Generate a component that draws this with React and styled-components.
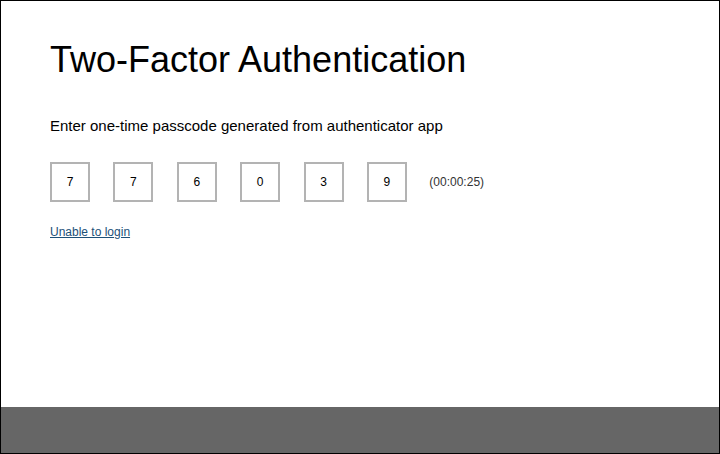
import React from "react";
import styled, { createGlobalStyle } from "styled-components";

const GlobalStyle = createGlobalStyle`
  html, body {
    margin: 0;
    padding: 0;
    background: #fff;
  }
  * {
    box-sizing: border-box;
  }
`;

const Frame = styled.div`
  width: 720px;
  height: 454px;
  border: 1px solid #000;
  display: flex;
  flex-direction: column;
  font-family: "Liberation Sans", Arial, sans-serif;
  color: #000;
`;
const Main = styled.main`
  flex: 1;
  padding: 37px 49px 0;
`;
const Title = styled.h1`
  margin: 0;
  font-size: 36px;
  font-weight: 400;
  line-height: 44px;
`;
const Prompt = styled.p`
  margin: 35px 0 0;
  font-size: 15px;
  line-height: 18px;
`;
const CodeRow = styled.div`
  display: flex;
  align-items: center;
  gap: 23.4px;
  margin-top: 27px;
`;
const Digit = styled.div`
  width: 40px;
  height: 40px;
  border: 2px solid #b3b3b3;
  display: flex;
  align-items: center;
  justify-content: center;
  font-size: 12px;
`;
const Timer = styled.span`
  margin-left: -1px;
  font-size: 12px;
  color: #333;
`;
const HelpLink = styled.a`
  display: inline-block;
  margin-top: 23px;
  font-size: 12px;
  color: #1c5078;
  text-decoration: underline;
`;
const Footer = styled.footer`
  height: 46px;
  background: #666;
`;

const code = ["7", "7", "6", "0", "3", "9"];

const App = () => {
  return (
    <>
      <GlobalStyle />
      <Frame>
        <Main>
          <Title>Two-Factor Authentication</Title>
          <Prompt>Enter one-time passcode generated from authenticator app</Prompt>
          <CodeRow>
            {code.map((d, i) => (
              <Digit key={i}>{d}</Digit>
            ))}
            <Timer>(00:00:25)</Timer>
          </CodeRow>
          <HelpLink href="#">Unable to login</HelpLink>
        </Main>
        <Footer />
      </Frame>
    </>
  );
};

export default App;
